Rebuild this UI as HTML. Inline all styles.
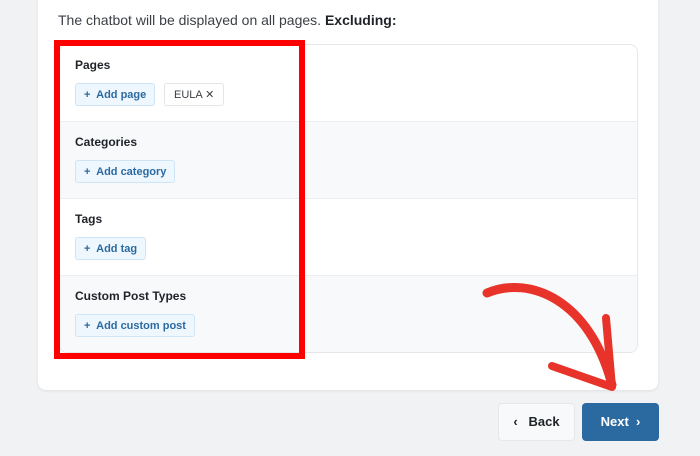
<!DOCTYPE html>
<html><head><style>
body{margin:0;width:700px;height:456px;background:#f1f2f4;font-family:"Liberation Sans",sans-serif;position:relative;overflow:hidden}
.card{position:absolute;left:38px;top:-10px;width:620px;height:400px;background:#fff;border-radius:8px;box-shadow:0 1px 3px rgba(0,0,0,.08)}
.intro{position:absolute;left:58px;top:12px;font-size:14px;color:#3b3f45}
.box{position:absolute;left:59px;top:44px;width:579px;height:309px;border:1px solid #e5e7eb;border-radius:8px;overflow:hidden;box-sizing:border-box}
.row{height:77px;border-bottom:1px solid #eceef1;box-sizing:border-box;padding:13px 0 0 15px;position:relative}
.row:last-child{border-bottom:none}
.g{background:#f8f9fb}
.row h4{margin:0;font-size:12px;color:#1f2328;font-weight:bold}
.btn{position:absolute;top:38px;left:15px;height:23px;border:1px solid #cfe4f5;background:#eff7fe;border-radius:3px;font-size:11px;font-weight:bold;color:#2b6aa0;line-height:23px;padding:0 8px;box-sizing:border-box}
.tag{position:absolute;top:38px;left:104px;height:23px;border:1px solid #e3e5e8;background:#fff;border-radius:3px;font-size:11px;color:#3b3f45;line-height:22px;padding:0 9px;box-sizing:border-box}
.red{position:absolute;left:54px;top:40px;width:251px;height:319px;border:6px solid #ff0000;box-sizing:border-box}
.back{position:absolute;left:498px;top:403px;width:77px;height:38px;background:#f8f9fa;border:1px solid #e5e7eb;border-radius:4px;box-sizing:border-box;font-size:13px;font-weight:bold;color:#1f2328;line-height:36px;text-align:center}
.next{position:absolute;left:582px;top:403px;width:77px;height:38px;background:#2b6aa0;border-radius:4px;font-size:13px;font-weight:bold;color:#fff;line-height:38px;text-align:center}
</style></head><body>
<div class="card"></div>
<div class="intro">The chatbot will be displayed on all pages. <b style="color:#1f2328">Excluding:</b></div>
<div class="box">
<div class="row"><h4>Pages</h4><div class="btn">+&nbsp; Add page</div><div class="tag">EULA ✕</div></div>
<div class="row g"><h4>Categories</h4><div class="btn">+&nbsp; Add category</div></div>
<div class="row"><h4>Tags</h4><div class="btn">+&nbsp; Add tag</div></div>
<div class="row g"><h4>Custom Post Types</h4><div class="btn">+&nbsp; Add custom post</div></div>
</div>
<div class="red"></div>
<div class="back">‹&nbsp;&nbsp; Back</div>
<div class="next">Next &nbsp;›</div>
<svg style="position:absolute;left:0;top:0" width="700" height="456">
<path d="M487 293 C530 275 590 300 612 385" fill="none" stroke="#e8332a" stroke-width="9" stroke-linecap="round"/>
<path d="M552 366 L612 387 L606 318" fill="none" stroke="#e8332a" stroke-width="8" stroke-linecap="round" stroke-linejoin="round"/>
</svg>
</body></html>
